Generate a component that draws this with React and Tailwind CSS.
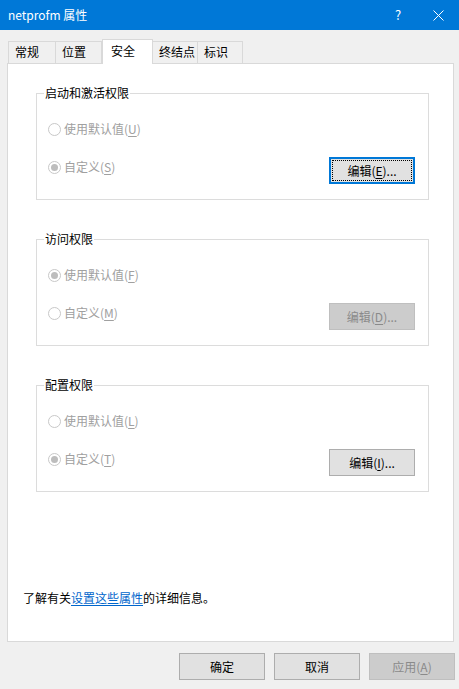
import { useState } from 'react'

const TABS = [
  { label: '常规', w: 'w-[48px]' },
  { label: '位置', w: 'w-[47px]' },
  { label: '安全', w: 'w-[51px]', active: true },
  { label: '终结点', w: 'w-[46px]' },
  { label: '标识', w: 'w-[46px]' },
]

const GROUPS = [
  {
    title: '启动和激活权限',
    first: { label: '使用默认值', key: 'U' },
    second: { label: '自定义', key: 'S' },
    checked: 'second',
    button: { key: 'E', state: 'focus' },
  },
  {
    title: '访问权限',
    first: { label: '使用默认值', key: 'F' },
    second: { label: '自定义', key: 'M' },
    checked: 'first',
    button: { key: 'D', state: 'disabled' },
  },
  {
    title: '配置权限',
    first: { label: '使用默认值', key: 'L' },
    second: { label: '自定义', key: 'T' },
    checked: 'second',
    button: { key: 'I', state: 'normal' },
  },
]

function Radio({ label, hotkey, checked }) {
  return (
    <div className="flex items-center gap-[3px] h-[16px] text-[#a0a0a0]">
      <span className="w-[13px] h-[13px] rounded-full border border-[#c8c8c8] bg-white flex items-center justify-center">
        {checked && <span className="w-[7px] h-[7px] rounded-full bg-[#bdbdbd]" />}
      </span>
      <span>
        {label}(<span className="underline underline-offset-2">{hotkey}</span>)
      </span>
    </div>
  )
}

function WinButton({ children, state = 'normal' }) {
  if (state === 'focus') {
    return (
      <button className="w-[86px] h-[27px] border-2 border-[#0078d7] bg-[#e1e1e1] p-px">
        <span className="w-full h-full flex items-center justify-center border border-dotted border-black text-black">
          {children}
        </span>
      </button>
    )
  }
  if (state === 'disabled') {
    return (
      <button disabled className="w-[86px] h-[27px] border border-[#bfbfbf] bg-[#cccccc] text-[#8a8a8a] flex items-center justify-center">
        {children}
      </button>
    )
  }
  return (
    <button className="w-[86px] h-[27px] border border-[#adadad] bg-[#e1e1e1] text-black flex items-center justify-center">
      {children}
    </button>
  )
}

function Group({ title, first, second, checked, button }) {
  return (
    <div className="relative h-[107px] border border-[#dcdcdc] pl-[11px] pr-[13px] pt-[27px]">
      <span className="absolute -top-[9px] left-[7px] bg-white px-px text-black leading-[16px]">{title}</span>
      <Radio label={first.label} hotkey={first.key} checked={checked === 'first'} />
      <div className="mt-[20px] flex items-start justify-between">
        <div className="mt-[2px]">
          <Radio label={second.label} hotkey={second.key} checked={checked === 'second'} />
        </div>
        <WinButton state={button.state}>
          编辑(<span className="underline underline-offset-2">{button.key}</span>)...
        </WinButton>
      </div>
    </div>
  )
}

export default function App() {
  const [tab] = useState('安全')

  return (
    <div className="w-[459px] h-[689px] bg-[#f0f0f0] flex flex-col text-[12px] leading-[16px] font-['Microsoft_YaHei','Noto_Sans_CJK_SC','Noto_Sans',sans-serif] overflow-hidden">
      {/* title bar */}
      <div className="h-[30px] bg-[#0078d7] flex items-center text-white shrink-0">
        <span className="pl-[8px] flex-1 text-[12px]">netprofm 属性</span>
        <span className="w-[46px] text-center text-[13px] -mr-[6px]">?</span>
        <span className="w-[46px] h-[30px] flex items-center justify-center mr-[-2px]">
          <svg width="11" height="11" viewBox="0 0 11 11" fill="none" stroke="white" strokeWidth="1">
            <path d="M0.5 0.5 L10.5 10.5 M10.5 0.5 L0.5 10.5" />
          </svg>
        </span>
      </div>

      <div className="pl-[7px] pr-[5px] pt-[8px] flex flex-col">
        {/* tabs */}
        <div className="flex items-end h-[25px] pl-px">
          {TABS.map(t => (
            t.label === tab ? (
              <div key={t.label} className={`${t.w} h-[25px] -mb-px relative z-10 bg-white border border-b-0 border-[#d9d9d9] pl-[8px] pt-[3px] text-black`}>
                {t.label}
              </div>
            ) : (
              <div key={t.label} className={`${t.w} h-[22px] bg-[#f0f0f0] border border-b-0 border-[#d9d9d9] -ml-px first:ml-0 pl-[6px] pt-[2px] text-black`}>
                {t.label}
              </div>
            )
          ))}
        </div>

        {/* panel */}
        <div className="h-[579px] bg-white border border-[#d9d9d9] pl-[28px] pr-[24px] pt-[29px] flex flex-col">
          <div className="flex flex-col gap-[39px]">
            {GROUPS.map(g => <Group key={g.title} {...g} />)}
          </div>
          <p className="mt-auto mb-[35px] -ml-[13px] text-black">
            了解有关<a className="text-[#0066cc] underline underline-offset-2 cursor-pointer">设置这些属性</a>的详细信息。
          </p>
        </div>

        {/* footer buttons */}
        <div className="flex justify-end gap-[9px] mt-[11px] -mr-px">
          <WinButton>确定</WinButton>
          <WinButton>取消</WinButton>
          <WinButton state="disabled">
            应用(<span className="underline underline-offset-2">A</span>)
          </WinButton>
        </div>
      </div>
    </div>
  )
}
